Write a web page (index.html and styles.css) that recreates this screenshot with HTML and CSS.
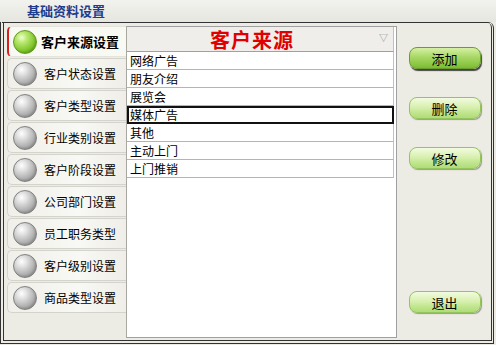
FILE: index.html
```html
<!DOCTYPE html>
<html lang="zh">
<head>
<meta charset="utf-8">
<title>基础资料设置</title>
<link rel="stylesheet" href="styles.css">
</head>
<body>
<div class="title">基础资料设置</div>
<div class="frame">
  <div class="nav">
    <div class="tab active"><span class="ball"></span><span class="label">客户来源设置</span></div>
    <div class="tab"><span class="ball"></span><span class="label">客户状态设置</span></div>
    <div class="tab"><span class="ball"></span><span class="label">客户类型设置</span></div>
    <div class="tab"><span class="ball"></span><span class="label">行业类别设置</span></div>
    <div class="tab"><span class="ball"></span><span class="label">客户阶段设置</span></div>
    <div class="tab"><span class="ball"></span><span class="label">公司部门设置</span></div>
    <div class="tab"><span class="ball"></span><span class="label">员工职务类型</span></div>
    <div class="tab"><span class="ball"></span><span class="label">客户级别设置</span></div>
    <div class="tab"><span class="ball"></span><span class="label">商品类型设置</span></div>
  </div>
  <div class="list">
    <div class="list-head"><span class="head-text">客户来源</span><span class="sort">▽</span></div>
    <div class="row">网络广告</div>
    <div class="row">朋友介绍</div>
    <div class="row">展览会</div>
    <div class="row selected">媒体广告</div>
    <div class="row">其他</div>
    <div class="row">主动上门</div>
    <div class="row">上门推销</div>
  </div>
  <div class="actions">
    <button class="btn primary">添加</button>
    <button class="btn">删除</button>
    <button class="btn">修改</button>
    <div class="spacer"></div>
    <button class="btn">退出</button>
  </div>
</div>
</body>
</html>
```

FILE: styles.css
```css
* { box-sizing: border-box; }
html, body {
  margin: 0;
  width: 496px;
  height: 345px;
  overflow: hidden;
  background: #ecebe4;
  font-family: "Noto Sans CJK SC", "Liberation Sans", sans-serif;
  font-size: 12px;
  color: #000;
}
.title {
  height: 22px;
  padding: 3px 0 0 27px;
  font-size: 13px;
  font-weight: bold;
  line-height: 16px;
  color: #1e3c8c;
  background: linear-gradient(#f2f2ee, #e6e6e0);
}
.frame {
  display: flex;
  width: 494px;
  height: 322px;
  border-top: 1px solid #333;
  border-right: 3px double #333;
  border-bottom: 4px double #333;
  border-left: 4px double #333;
  border-top-right-radius: 6px;
  padding: 3px 0 2px 3px;
  background: #ecebe4;
}
.nav {
  width: 120px;
  display: flex;
  flex-direction: column;
  gap: 1px;
  border-right: 1px solid #a8a8a0;
}
.tab {
  height: 31px;
  display: flex;
  align-items: center;
  padding-left: 5px;
  border: 1px solid #d4d3cc;
  border-right: none;
  border-radius: 5px 0 0 5px;
  background: linear-gradient(90deg, #f0efea, #f8f8f4 60%, #efeee8);
}
.tab.active {
  background: #f9f9f4;
  border-left: 2px solid #d42020;
  border-color: #e4e3dc #e4e3dc #e4e3dc #d42020;
  padding-left: 4px;
}
.ball {
  width: 24px;
  height: 24px;
  border-radius: 50%;
  flex: none;
  border: 1px solid #808080;
  background: radial-gradient(circle at 35% 30%, #ffffff 0, #e0e0e0 25%, #acacac 65%, #868686 100%);
  box-shadow: inset -1px -1px 2px rgba(0,0,0,0.15);
}
.tab.active .ball {
  border-color: #5e9a1c;
  background: radial-gradient(circle at 35% 30%, #f0ffd0 0, #b8e870 25%, #84c830 60%, #559a12 100%);
}
.label {
  margin-left: 7px;
  font-size: 12px;
  white-space: nowrap;
}
.tab.active .label {
  font-weight: bold;
  font-size: 13px;
  margin-left: 4px;
}
.list {
  width: 270px;
  background: #fff;
  border: 1px solid #a0a0a0;
  border-left: none;
  padding-right: 2px;
}
.list-head {
  height: 25px;
  position: relative;
  display: flex;
  align-items: center;
  justify-content: center;
  padding-right: 16px;
  background: #efeeea;
  border-bottom: 1px solid #a0a0a0;
  border-right: 1px solid #c0c0c0;
}
.head-text {
  color: #e00000;
  font-size: 20px;
  font-weight: bold;
  letter-spacing: 1px;
}
.sort {
  position: absolute;
  right: 5px;
  top: 4px;
  font-size: 9px;
  color: #888;
}
.row {
  height: 18px;
  line-height: 17px;
  padding-left: 3px;
  border-bottom: 1px solid #b4b4b4;
  border-right: 1px solid #c0c0c0;
  font-size: 12px;
}
.row.selected {
  border: 2px solid #111;
  line-height: 14px;
  padding-left: 1px;
}
.actions {
  flex: 1;
  display: flex;
  flex-direction: column;
  align-items: center;
  padding: 21px 0 25px 0;
}
.btn {
  width: 72px;
  height: 22px;
  padding: 0;
  font-family: inherit;
  font-size: 13px;
  color: #000;
  border: 1px solid #94c45c;
  border-radius: 8px;
  background: linear-gradient(#f2fbe0, #d8f0b0 45%, #bfe58c 75%, #b0dc78);
  box-shadow: 1px 1px 1px #9a9a90;
  margin-bottom: 28px;
  margin-left: 1px;
}
.btn.primary {
  border-color: #6a9e2c;
  background: linear-gradient(#d6f0a4, #a8d866 45%, #8cc844 80%, #7cba34);
  box-shadow: 1px 2px 1px #444;
}
.spacer { flex: 1; }
.actions .btn:last-child { margin-bottom: 0; }
```
